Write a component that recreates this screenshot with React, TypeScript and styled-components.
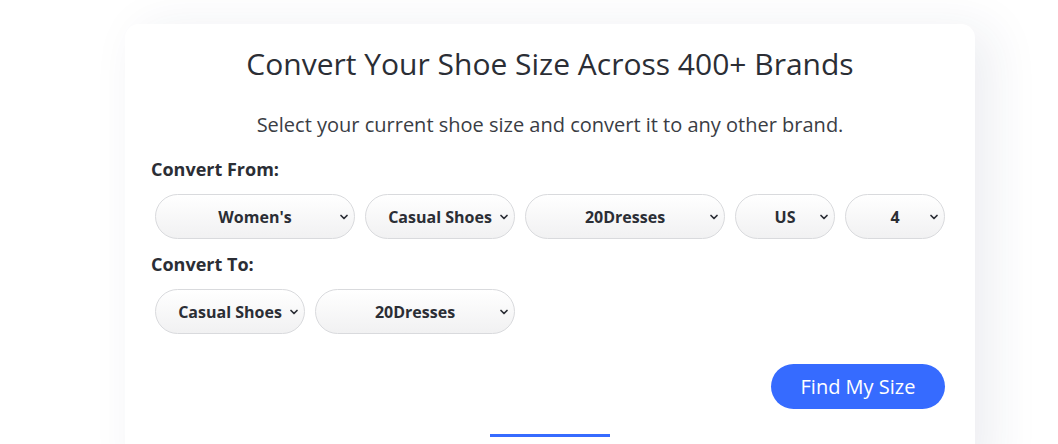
import React from 'react';
import styled, { createGlobalStyle } from 'styled-components';
import { ChevronDown } from 'lucide-react';

const GlobalStyle = createGlobalStyle`
  html, body {
    margin: 0;
    padding: 0;
    background: #ffffff;
    font-family: "Open Sans", "Noto Sans", Arial, sans-serif;
    color: #2b2e35;
    overflow: hidden;
  }
`;

const Page = styled.div`
  padding: 24px 0 0 125px;
`;

const Card = styled.section`
  width: 850px;
  box-sizing: border-box;
  background: #fff;
  border-radius: 14px;
  box-shadow: 16px 6px 50px rgba(40, 50, 90, 0.085);
  padding: 20px 26px 40px;
`;

const Title = styled.h1`
  margin: 0;
  text-align: center;
  font-size: 30px;
  font-weight: 400;
  line-height: 40px;
  color: #2b2e35;
`;

const Subtitle = styled.p`
  margin: 27px 0 0;
  text-align: center;
  font-size: 20px;
  line-height: 27px;
  color: #3a3d44;
`;

const Label = styled.div<{ $gap: number }>`
  margin: ${(p) => p.$gap}px 0 0;
  font-size: 18px;
  font-weight: 700;
  line-height: 24px;
  color: #2b2e35;
`;

const SelectRow = styled.div`
  display: flex;
  gap: 10px;
  margin: 13px 0 0 4px;
`;

const SelectWrap = styled.div<{ $w: number }>`
  position: relative;
  width: ${(p) => p.$w}px;
  height: 45px;
`;

const Select = styled.select`
  appearance: none;
  -webkit-appearance: none;
  width: 100%;
  height: 100%;
  box-sizing: border-box;
  border: 1px solid #d9dadd;
  border-radius: 23px;
  background: linear-gradient(#ffffff, #f1f1f2);
  font-family: inherit;
  font-size: 16px;
  font-weight: 700;
  color: #2b2e35;
  text-align: center;
  text-align-last: center;
  padding: 0 4px;
  outline: none;
`;

const Chevron = styled(ChevronDown)`
  position: absolute;
  right: 5px;
  top: 50%;
  transform: translateY(-50%);
  pointer-events: none;
  color: #2b2e35;
`;

const Actions = styled.div`
  display: flex;
  justify-content: flex-end;
  margin: 30px 4px 0 0;
`;

const FindButton = styled.button`
  width: 174px;
  height: 45px;
  border: none;
  border-radius: 23px;
  background: #366bff;
  color: #fff;
  font-family: inherit;
  font-size: 20px;
  font-weight: 400;
`;

const Indicator = styled.div`
  width: 120px;
  height: 3px;
  margin: 25px auto 0;
  background: #366bff;
`;

type Field = { value: string; width: number };

const from: Field[] = [
  { value: "Women's", width: 200 },
  { value: 'Casual Shoes', width: 150 },
  { value: '20Dresses', width: 200 },
  { value: 'US', width: 100 },
  { value: '4', width: 100 },
];

const to: Field[] = [
  { value: 'Casual Shoes', width: 150 },
  { value: '20Dresses', width: 200 },
];

const Dropdown: React.FC<Field> = ({ value, width }) => (
  <SelectWrap $w={width}>
    <Select defaultValue={value}>
      <option>{value}</option>
    </Select>
    <Chevron size={12} strokeWidth={3.5} />
  </SelectWrap>
);

export default function App() {
  return (
    <Page>
      <GlobalStyle />
      <Card>
        <Title>Convert Your Shoe Size Across 400+ Brands</Title>
        <Subtitle>Select your current shoe size and convert it to any other brand.</Subtitle>
        <Label $gap={19}>Convert From:</Label>
        <SelectRow>
          {from.map((f, i) => (
            <Dropdown key={i} {...f} />
          ))}
        </SelectRow>
        <Label $gap={13}>Convert To:</Label>
        <SelectRow>
          {to.map((f, i) => (
            <Dropdown key={i} {...f} />
          ))}
        </SelectRow>
        <Actions>
          <FindButton>Find My Size</FindButton>
        </Actions>
        <Indicator />
      </Card>
    </Page>
  );
}
